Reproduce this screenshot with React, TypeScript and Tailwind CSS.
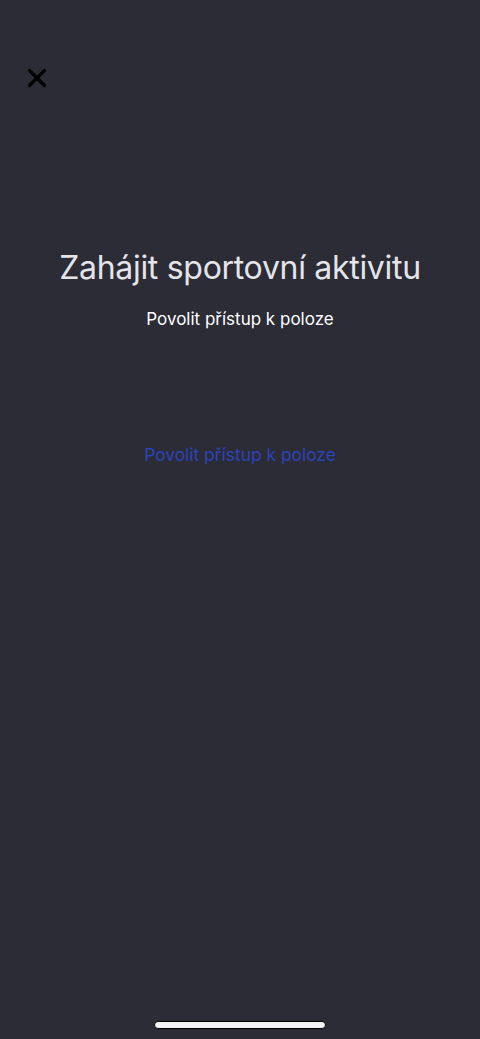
import React from "react";

export default function App() {
  return (
    <div
      className="w-[480px] h-[1039px] bg-[#2c2c36] flex flex-col relative overflow-hidden"
      style={{ fontFamily: "Inter, 'Noto Sans', sans-serif" }}
    >
      <div className="pt-[68px] pl-[27px]">
        <svg width="20" height="20" viewBox="0 0 20 20" className="block">
          <path d="M2.5 2.5 L17.5 17.5 M17.5 2.5 L2.5 17.5" stroke="#000" strokeWidth="3.2" strokeLinecap="round" />
        </svg>
      </div>
      <div className="flex flex-col items-center mt-[160px]">
        <h1 className="text-[32px] leading-[40px] text-[#e4e4e9] tracking-[-0.3px]">Zahájit sportovní aktivitu</h1>
        <p className="mt-[19px] text-[17px] leading-[24px] text-white">Povolit přístup k poloze</p>
        <button className="mt-[112px] text-[17.4px] leading-[24px] text-[#2b43b6]">Povolit přístup k poloze</button>
      </div>
      <div className="absolute bottom-[10px] left-[154px] w-[172px] h-[8px] rounded-full bg-[#f5f5f7] border border-black" />
    </div>
  );
}
